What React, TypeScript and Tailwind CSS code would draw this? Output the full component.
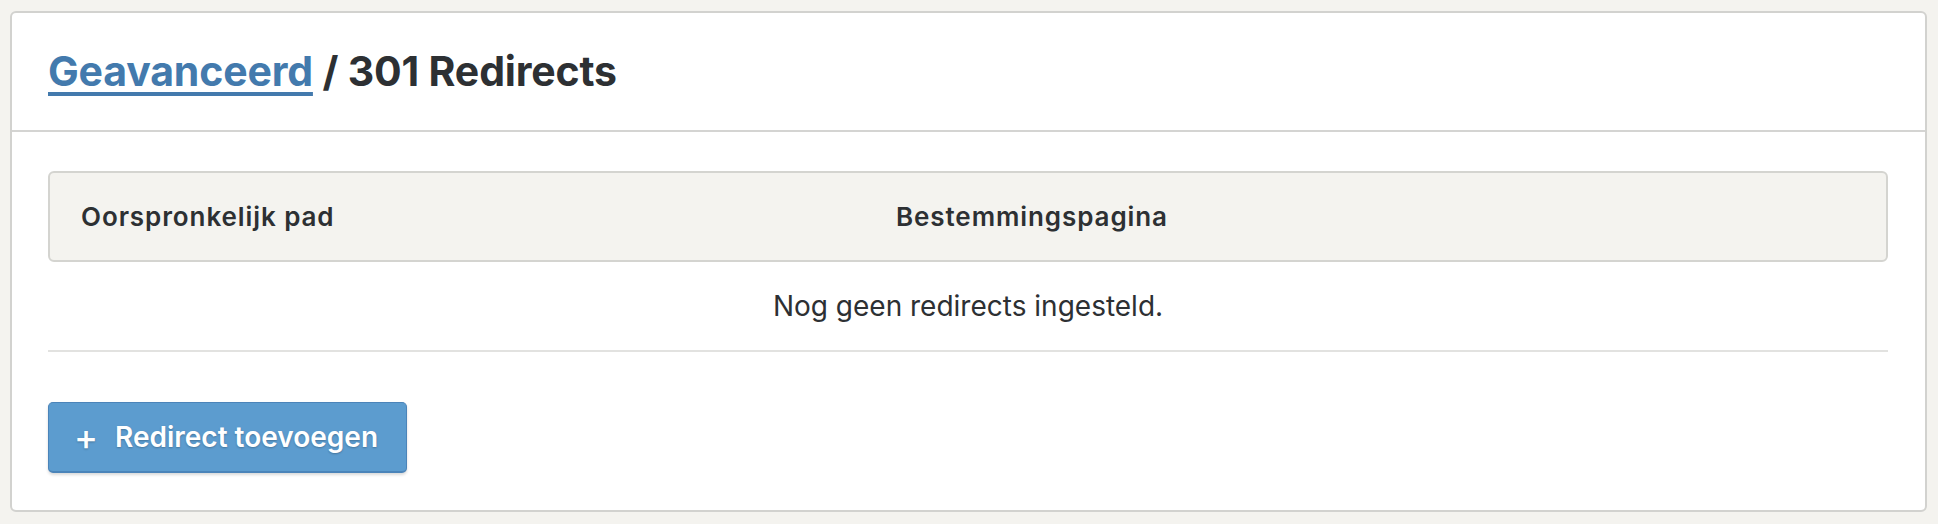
import React from "react";

export default function App() {
  return (
    <div
      className="min-h-[524px] w-full bg-[#f4f3ef] pl-[10px] pr-[11px] pt-[11px] pb-[12px] text-[#2d3033]"
      style={{ fontFamily: "Inter, 'Liberation Sans', sans-serif" }}
    >
      <div className="rounded-[6px] border-2 border-[#d2d2cf] bg-white">
        <div className="flex h-[119px] items-center border-b-2 border-[#d4d4d2] pl-[36px]">
          <h1 className="text-[41px] font-bold tracking-[-0.004em]">
            <a href="#" className="text-[#437aad] underline decoration-[4px] underline-offset-[6px]">
              Geavanceerd
            </a>{" "}
            / 301 Redirects
          </h1>
        </div>
        <div className="pl-[36px] pr-[37px] pt-[39px] pb-[37px]">
          <div className="flex h-[91px] items-center rounded-[6px] border-2 border-[#d4d4d0] bg-[#f4f3ef] text-[26px] font-semibold tracking-[0.035em]">
            <div className="w-[846px] pl-[31px]">Oorspronkelijk pad</div>
            <div>Bestemmingspagina</div>
          </div>
          <div className="flex h-[90px] items-center justify-center border-b-2 border-[#e2e2e0] text-[28px]">
            Nog geen redirects ingesteld.
          </div>
          <button className="mt-[50px] flex h-[71px] w-[359px] items-center rounded-[5px] border border-[#4b84b9] border-b-[2px] bg-[#5c9ccf] pl-[25px] text-[28px] font-semibold text-white shadow-[0_2px_3px_rgba(0,0,0,0.15)] [text-shadow:0_1px_2px_rgba(0,0,0,0.25)]">
            <span className="mr-[17px] text-[36px] font-medium leading-none">+</span>
            Redirect toevoegen
          </button>
        </div>
      </div>
    </div>
  );
}
